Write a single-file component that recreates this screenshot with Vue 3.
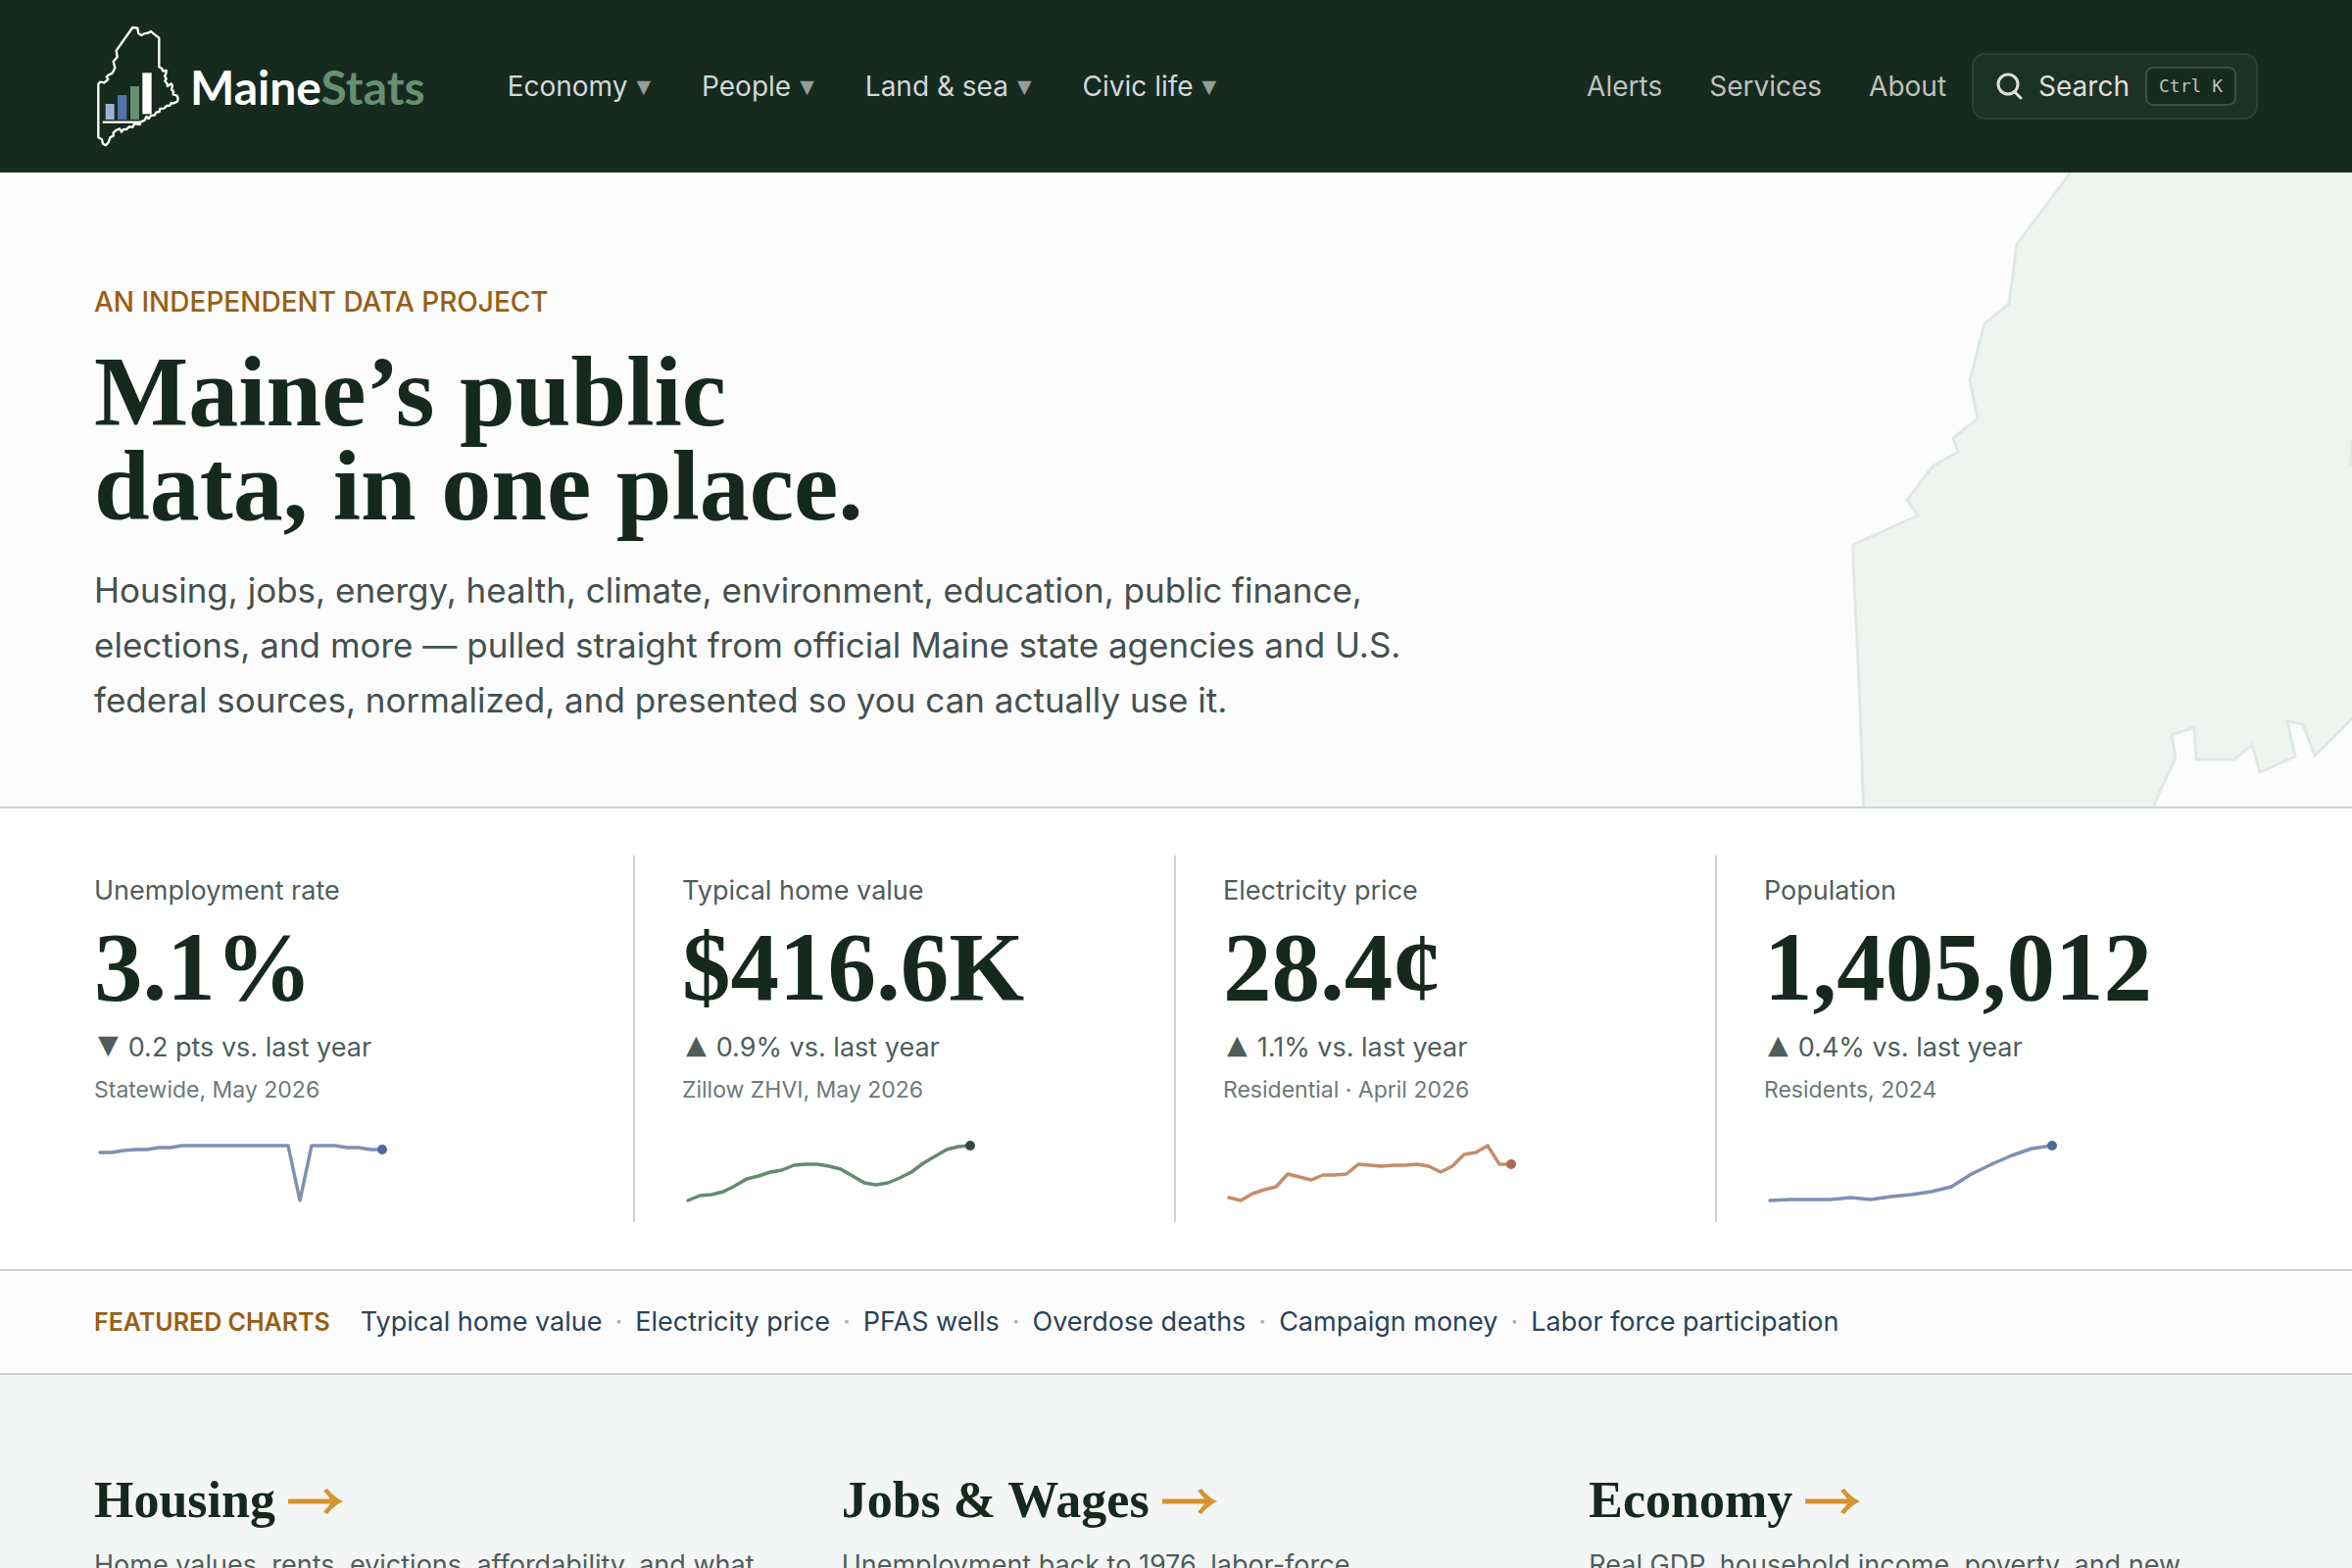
<script setup>
const menus = ['Economy', 'People', 'Land & sea', 'Civic life']
const links = ['Alerts', 'Services', 'About']

const stats = [
  {
    label: 'Unemployment rate', value: '3.1%', arrow: '▼', delta: '0.2 pts vs. last year',
    meta: 'Statewide, May 2026', tone: 'blue',
    points: [13, 13, 11, 10, 10, 8, 8, 6, 6, 6, 6, 6, 6, 6, 6, 6, 6, 62, 6, 6, 6, 8, 8, 10, 10],
  },
  {
    label: 'Typical home value', value: '$416.6K', arrow: '▲', delta: '0.9% vs. last year',
    meta: 'Zillow ZHVI, May 2026', tone: 'green',
    points: [62, 57, 56, 53, 47, 40, 37, 33, 31, 26, 25, 25, 27, 30, 37, 44, 46, 44, 39, 33, 24, 17, 10, 7, 6],
  },
  {
    label: 'Electricity price', value: '28.4¢', arrow: '▲', delta: '1.1% vs. last year',
    meta: 'Residential · April 2026', tone: 'orange',
    points: [59, 62, 55, 51, 48, 35, 38, 41, 36, 36, 35, 25, 26, 27, 26, 26, 25, 27, 33, 27, 15, 13, 6, 25, 25],
  },
  {
    label: 'Population', value: '1,405,012', arrow: '▲', delta: '0.4% vs. last year',
    meta: 'Residents, 2024', tone: 'blue',
    points: [62, 61, 61, 61, 59, 61, 58, 56, 53, 48, 35, 25, 16, 9, 6],
  },
]

const featured = [
  'Typical home value', 'Electricity price', 'PFAS wells',
  'Overdose deaths', 'Campaign money', 'Labor force participation',
]

const topics = [
  { title: 'Housing', text: 'Home values, rents, evictions, affordability, and what' },
  { title: 'Jobs & Wages', text: 'Unemployment back to 1976, labor-force' },
  { title: 'Economy', text: 'Real GDP, household income, poverty, and new' },
]

// Spread the values evenly over the 288-unit plot inside a 6-unit margin.
function line(points) {
  const step = 288 / (points.length - 1)
  return points.map((y, i) => `${(6 + i * step).toFixed(1)},${y}`).join(' ')
}
</script>

<template>
  <div class="page">
    <header class="header">
      <a class="brand" href="#">
        <svg class="brand-mark" viewBox="48 78 264 372" aria-hidden="true">
          <path
            class="outline"
            d="M166 84 L181 86 L184 102 L193 108 L202 103 L213 101 L222 96 L231 104 L247 116 V205 L256 210 L258 217 L269 216 L268 226 L264 232 L269 241 L265 248 L271 255 L273 264 L284 256 L288 263 L285 274 L291 280 L290 289 L301 292 L305 301 L303 311 L289 317 L284 315 L280 323 L270 324 L262 332 L250 333 L248 342 L238 344 L234 352 L222 354 L215 363 L208 357 L203 368 L190 374 L188 381 L172 378 L166 389 L155 388 L148 396 L138 396 L132 404 L126 394 L115 399 L107 406 L107 416 L97 421 L92 436 L84 445 L75 440 L72 427 L61 421 V257 L67 251 L79 253 L91 243 L86 235 L92 230 L104 224 L112 208 L107 188 L119 175 L116 155 Z"
          />
          <rect x="83" y="318" width="27" height="48" fill="#9bb3cf" />
          <rect x="120" y="291" width="28" height="75" fill="#5273a8" />
          <rect x="159" y="264" width="27" height="102" fill="#678f72" />
          <rect x="196" y="223" width="28" height="126" fill="#fff" />
          <path class="base" d="M74 374 H190" />
        </svg>
        <span class="brand-name">Maine<span class="brand-tail">Stats</span></span>
      </a>

      <nav class="menus" aria-label="Topics">
        <button v-for="m in menus" :key="m" class="menu" type="button">
          {{ m }}<span class="caret" aria-hidden="true">▼</span>
        </button>
      </nav>

      <nav class="links" aria-label="Site">
        <a v-for="l in links" :key="l" href="#">{{ l }}</a>
      </nav>

      <button class="search" type="button">
        <svg viewBox="0 0 28 28" aria-hidden="true">
          <circle cx="13" cy="12" r="10" />
          <path d="M20 20 L26 26" />
        </svg>
        <span>Search</span>
        <kbd>Ctrl K</kbd>
      </button>
    </header>

    <section class="hero">
      <svg class="hero-map" viewBox="0 0 540 648" aria-hidden="true">
        <path
          d="M268 -20 L198 73 L190 134 L165 154 L150 212 L158 251 L133 271 L138 285 L112 300 L86 334 L97 350 L31 380 L31 398 L37 520 L42 660 H345 L338 645 L360 597 L356 574 L379 566 L381 599 H420 L438 584 L446 612 L482 596 L474 560 L490 563 L502 595 L560 538 V310 L539 297 L540 274 L560 260 V-20 Z"
        />
      </svg>
      <p class="eyebrow">AN INDEPENDENT DATA PROJECT</p>
      <h1>Maine’s public<br />data, in one place.</h1>
      <p class="lede">
        Housing, jobs, energy, health, climate, environment, education, public finance,<br />
        elections, and more — pulled straight from official Maine state agencies and U.S.<br />
        federal sources, normalized, and presented so you can actually use it.
      </p>
    </section>

    <section class="stats">
      <article v-for="s in stats" :key="s.label" class="stat">
        <h2>{{ s.label }}</h2>
        <p class="value">{{ s.value }}</p>
        <p class="delta"><span class="mark">{{ s.arrow }}</span>{{ s.delta }}</p>
        <p class="meta">{{ s.meta }}</p>
        <svg class="spark" :class="s.tone" viewBox="0 0 300 68" aria-hidden="true">
          <polyline :points="line(s.points)" stroke-width="3.5" />
          <circle cx="294" :cy="s.points[s.points.length - 1]" r="5" />
        </svg>
      </article>
    </section>

    <section class="featured">
      <h2>FEATURED CHARTS</h2>
      <ul>
        <li v-for="f in featured" :key="f"><a href="#">{{ f }}</a></li>
      </ul>
    </section>

    <section class="topics">
      <article v-for="t in topics" :key="t.title">
        <h2>
          <a href="#">
            {{ t.title }}
            <svg viewBox="0 0 56 28" aria-hidden="true">
              <path d="M0 11.5 H43 L36 3 L40 1 Q47 10 56 14 Q47 18 40 27 L36 25 L43 16.5 H0 Z" />
            </svg>
          </a>
        </h2>
        <p>{{ t.text }}</p>
      </article>
    </section>
  </div>
</template>

<style>
body {
  margin: 0;
}
</style>

<style scoped>
.page {
  height: 100vh;
  overflow: hidden;
  background: #f4f6f5;
  color: #15291f;
  font-family: Inter, sans-serif;
  font-size: 27px;
}

h1,
h2,
p,
ul {
  margin: 0;
  padding: 0;
}

a {
  color: inherit;
  text-decoration: none;
}

button {
  font: inherit;
  cursor: pointer;
}

.header {
  display: flex;
  align-items: center;
  box-sizing: border-box;
  height: 176px;
  padding: 0 96px;
  background: #162a20;
  color: #d3d7d5;
  font-size: 28px;
}

.brand {
  display: flex;
  align-items: center;
  gap: 10px;
}

.brand-mark {
  width: 88px;
  height: 124px;
}

.outline {
  fill: none;
  stroke: #fff;
  stroke-width: 7;
  stroke-linejoin: round;
}

.base {
  fill: none;
  stroke: #fff;
  stroke-width: 7;
}

.brand-name {
  color: #fff;
  font-family: Lato, sans-serif;
  font-size: 48px;
  font-weight: 700;
}

.brand-tail {
  color: #678f72;
}

.menus {
  display: flex;
  gap: 52px;
  margin-left: 84px;
}

.menu {
  display: flex;
  align-items: center;
  gap: 9px;
  padding: 0;
  border: 0;
  background: none;
  color: inherit;
}

.caret {
  color: #949d98;
  font-family: "DejaVu Sans", sans-serif;
  font-size: 19px;
  line-height: 24px;
}

.links {
  display: flex;
  gap: 48px;
  margin-left: auto;
  color: #bcc2bf;
}

.search {
  display: flex;
  align-items: center;
  box-sizing: border-box;
  height: 68px;
  margin-left: 26px;
  padding: 0 20px 0 22px;
  border: 2px solid #2d4036;
  border-radius: 14px;
  background: #1d3227;
  color: #dcdfdd;
}

.search svg {
  width: 28px;
  height: 28px;
  margin-right: 16px;
  fill: none;
  stroke: #dcdfdd;
  stroke-width: 3;
  stroke-linecap: round;
}

.search kbd {
  box-sizing: border-box;
  height: 40px;
  margin-left: 16px;
  padding: 0 12px;
  border: 2px solid #3d4e45;
  border-radius: 8px;
  background: #162a20;
  color: #bcc2bf;
  font-family: "DejaVu Sans Mono", monospace;
  font-size: 18px;
  line-height: 36px;
}

.hero {
  position: relative;
  overflow: hidden;
  padding: 112px 96px 81px;
  border-bottom: 2px solid #cdd3d1;
  background: #fbfcfb;
}

.hero-map {
  position: absolute;
  top: 0;
  right: 0;
  width: 540px;
  height: 648px;
  fill: #eff4f0;
  stroke: #e0e8e3;
  stroke-width: 3;
}

.eyebrow {
  color: #9a5e14;
  font-size: 28px;
  font-weight: 500;
  line-height: 40px;
}

h1 {
  margin-top: 24px;
  font-family: "Liberation Serif", serif;
  font-size: 102px;
  font-weight: 700;
  line-height: 96px;
}

.lede {
  margin-top: 30px;
  color: #45504e;
  font-size: 35px;
  line-height: 56px;
}

.stats {
  display: grid;
  grid-template-columns: repeat(4, 1fr);
  padding: 48px 96px;
  border-bottom: 2px solid #cdd3d1;
  background: #fff;
}

.stat {
  padding: 16px 48px;
  border-right: 2px solid #cdd3d1;
}

.stat:first-child {
  padding-left: 0;
}

.stat:last-child {
  padding-right: 0;
  border-right: 0;
}

.stat h2 {
  color: #4f5d5b;
  font-size: 27px;
  font-weight: 400;
  line-height: 40px;
}

.value {
  margin-top: 8px;
  font-family: "Liberation Serif", serif;
  font-size: 99px;
  font-weight: 700;
  line-height: 100px;
}

.delta {
  display: flex;
  gap: 10px;
  margin-top: 12px;
  padding-left: 4px;
  color: #4f5d5b;
  line-height: 40px;
}

.mark {
  font-family: "DejaVu Sans", sans-serif;
  line-height: 34px;
}

.meta {
  margin-top: 3px;
  color: #6b7a78;
  font-size: 23px;
  line-height: 40px;
}

.spark {
  display: block;
  width: 300px;
  height: 68px;
  margin-top: 31px;
}

.spark polyline {
  fill: none;
  stroke-linecap: round;
  stroke-linejoin: round;
}

.blue polyline { stroke: #7d90b5; }
.blue circle { fill: #4d6a9c; }
.green polyline { stroke: #648b70; }
.green circle { fill: #34483f; }
.orange polyline { stroke: #c58d68; }
.orange circle { fill: #a86c50; }

.featured {
  display: flex;
  align-items: baseline;
  gap: 31px;
  padding: 32px 96px;
  border-bottom: 2px solid #cdd3d1;
  background: #fbfcfb;
  line-height: 40px;
}

.featured h2 {
  color: #9a5e14;
  font-size: 25px;
  font-weight: 600;
}

.featured ul {
  display: flex;
  color: #2b4257;
  list-style: none;
}

.featured li + li::before {
  content: "·";
  margin: 0 13px;
  color: #a3b0ac;
}

.topics {
  display: grid;
  grid-template-columns: repeat(3, 1fr);
  gap: 80px;
  padding: 96px 96px 64px;
}

.topics h2 {
  font-family: "Liberation Serif", serif;
  font-size: 52px;
  font-weight: 700;
  line-height: 64px;
}

.topics h2 svg {
  width: 56px;
  height: 28px;
  fill: #d6942f;
  vertical-align: 2px;
}

.topics p {
  margin-top: 12px;
  color: #4f5d5b;
  line-height: 44px;
}
</style>
